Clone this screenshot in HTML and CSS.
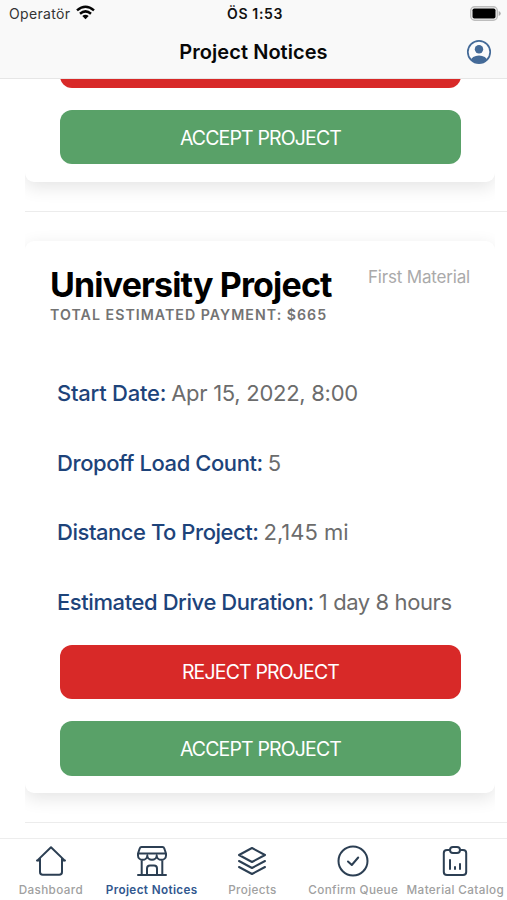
FILE: index.html
```html
<!DOCTYPE html>
<html lang="en">
<head>
<meta charset="utf-8">
<title>Project Notices</title>
<link rel="stylesheet" href="styles.css">
</head>
<body>
<header class="header">
  <div class="status">
    <div class="carrier"><span class="carrier-name">Operatör</span>
      <svg class="wifi" width="19" height="15" viewBox="0 0 19 15" fill="none" stroke="#050505" stroke-width="2.5"><path d="M1 5.400Q9.500-1.900 18 5.400M4 8.700Q9.500 4 15 8.700"/><path d="M6.300 11Q9.500 8.500 12.700 11L9.500 14.200Z" fill="#050505" stroke="none"/></svg>
    </div>
    <span class="clock">ÖS 1:53</span>
    <svg class="battery" width="31" height="15" viewBox="0 0 31 15"><rect x=".7" y=".7" width="26.600" height="13.600" rx="4" fill="#f4f4f4" stroke="#bdbdbd" stroke-width="1.400"/><rect x="2.500" y="2.500" width="23" height="10" rx="1.800" fill="#000"/><path d="M28.700 5Q30.700 5.700 30.700 7.500T28.700 10Z" fill="#aaa"/></svg>
  </div>
  <div class="toolbar">
    <h1 class="title">Project Notices</h1>
    <svg class="profile" width="26" height="26" viewBox="0 0 26 26"><defs><clipPath id="disc"><circle cx="13" cy="13" r="11"/></clipPath></defs><circle cx="13" cy="13" r="11.200" fill="#fbfbfc" stroke="#446a98" stroke-width="1.700"/><circle cx="13" cy="10.300" r="4.200" fill="#446a98"/><ellipse cx="13" cy="22" rx="8.200" ry="5.600" fill="#446a98" clip-path="url(#disc)"/></svg>
  </div>
</header>
<main class="content">
  <div class="item">
    <div class="clip"><section class="card">
      <div class="actions">
        <div class="btn reject"></div>
        <button class="btn accept">ACCEPT PROJECT</button>
      </div>
    </section></div>
  </div>
  <div class="item">
    <div class="clip"><section class="card">
      <div class="card-head">
        <div><h2 class="name">University Project</h2><p class="payment">TOTAL ESTIMATED PAYMENT: $665</p></div>
        <span class="material">First Material</span>
      </div>
      <dl class="facts">
        <div class="fact start"><dt>Start Date:</dt><dd>Apr 15, 2022, 8:00</dd></div>
        <div class="fact load"><dt>Dropoff Load Count:</dt><dd>5</dd></div>
        <div class="fact distance"><dt>Distance To Project:</dt><dd>2,145 mi</dd></div>
        <div class="fact duration"><dt>Estimated Drive Duration:</dt><dd>1 day 8 hours</dd></div>
      </dl>
      <div class="actions">
        <button class="btn reject">REJECT PROJECT</button>
        <button class="btn accept">ACCEPT PROJECT</button>
      </div>
    </section></div>
  </div>
</main>
<nav class="tabs">
  <a class="tab"><svg viewBox="0 0 32 32"><path d="M2.200 15.600 16 2.200 29.800 15.600M5 13.500V27Q5 29.800 7.800 29.800H24.200Q27 29.800 27 27V13.500M2 15.600H5M27 15.600H30"/></svg><span>Dashboard</span></a>
  <a class="tab active"><svg viewBox="0 0 32 32"><path d="M5.500 2H26.500Q27.800 2 28.300 3.500L30 8.500H2L3.700 3.500Q4.200 2 5.500 2ZM2 8.500V10.500A4.600 4.300 0 0 0 11.300 10.500A4.700 4.300 0 0 0 20.700 10.500A4.600 4.300 0 0 0 30 10.500V8.500M5.700 15V30M26.300 15V30M2 30H30M11 30V23.500Q11 20.500 14 20.500H18Q21 20.500 21 23.500V30"/></svg><span>Project Notices</span></a>
  <a class="tab"><svg viewBox="0 0 32 32"><path d="M16 3 29 10 16 17 3 10ZM3 16 16 23 29 16M3 22 16 29 29 22"/></svg><span>Projects</span></a>
  <a class="tab"><svg viewBox="0 0 32 32"><circle cx="16" cy="16" r="14.500"/><path d="M11 16.500 14.800 20 21.200 12.500"/></svg><span>Confirm Queue</span></a>
  <a class="tab"><svg viewBox="0 0 32 32"><path d="M11 5H8Q4.800 5 4.800 8V27Q4.800 30 8 30H24Q27.200 30 27.200 27V8Q27.200 5 24 5H21"/><rect x="11" y="2" width="10" height="6" rx="3"/><path d="M11 15V24M16 22V24M21 19V24"/></svg><span>Material Catalog</span></a>
</nav>
</body>
</html>
```
FILE: styles.css
```css
* { box-sizing: border-box; }
body { margin: 0; width: 507px; height: 900px; overflow: hidden; display: flex; flex-direction: column; background: #fff; font-family: Inter, "Liberation Sans", sans-serif; }
h1, h2, p, dl, dd { margin: 0; }
span, .title, .name, .payment { white-space: nowrap; }
.header { height: 79px; flex: none; background: #f9f9f9; border-bottom: 1px solid #e6e6e6; }
.status { height: 27px; display: grid; grid-template-columns: 1fr auto 1fr; align-items: center; padding: 0 6px 0 9px; }
.carrier { display: flex; align-items: center; gap: 6px; font-size: 14px; color: #333; }
.carrier-name { letter-spacing: .35px; }
.wifi { margin-top: -2px; }
.clock { font-size: 14px; font-weight: 600; letter-spacing: .65px; color: #111; }
.battery { justify-self: end; }
.toolbar { height: 50px; display: grid; grid-template-columns: 1fr auto 1fr; align-items: center; padding: 0 15px; }
.title { grid-column: 2; font-size: 20px; font-weight: 600; letter-spacing: .05px; color: #080808; }
.profile { justify-self: end; }
.content { flex: 1; min-height: 0; overflow: hidden; display: flex; flex-direction: column; justify-content: flex-end; padding: 0 0 15px 25px; }
.item { flex: none; border-bottom: 1px solid #ececec; }
.clip { width: 470px; padding: 29px 0; overflow: hidden; }
.card { border-radius: 9px; background: #fff; box-shadow: 0 5px 18px rgba(0,0,0,.11); padding-bottom: 17.500px; }
.card-head { display: flex; justify-content: space-between; align-items: flex-start; padding: 24px 25px 0; height: 117.500px; }
.name { font-size: 34px; line-height: 40px; font-weight: 700; letter-spacing: -.85px; color: #000; }
.payment { font-size: 14.200px; line-height: 19px; font-weight: 600; letter-spacing: 1.020px; color: #737373; }
.material { font-size: 17px; line-height: 24px; letter-spacing: -.18px; color: #aaa; }
.facts { padding-left: 32px; }
.fact { height: 69.600px; display: flex; align-items: center; gap: 5px; font-size: 22px; white-space: nowrap; }
dt { color: #1d437a; font-weight: 450; }
dd { color: #6c6c6c; }
.start dt { letter-spacing: -.24px; }
.start dd { letter-spacing: -.28px; }
.load dt { letter-spacing: -.42px; }
.distance dt { letter-spacing: -.46px; }
.duration dt { letter-spacing: -.42px; }
.duration dd { letter-spacing: -.4px; }
.actions { display: grid; gap: 22px; padding: 7.700px 34px 0 35px; }
.btn { height: 54.500px; border: 0; border-radius: 12px; padding: 1px 0 0; color: #fff; font: 400 19.500px Inter, sans-serif; letter-spacing: -.85px; }
.reject { background: #d82928; }
.accept { background: #59a168; }
.tabs { height: 62px; flex: none; display: grid; grid-template-columns: repeat(4, 100.800px) 1fr; padding-left: .5px; border-top: 1px solid #ededed; background: #fff; }
.tab { display: flex; flex-direction: column; align-items: center; padding-top: 6px; min-width: 0; font-size: 11.700px; font-weight: 500; color: #a0a0a0; }
.tab svg { width: 32px; height: 32px; fill: none; stroke: #2c3f53; stroke-width: 2; stroke-linecap: round; stroke-linejoin: round; }
.tab span { line-height: 16px; margin-top: 5px; letter-spacing: .38px; }
.active { color: #31578e; font-weight: 600; }
```
